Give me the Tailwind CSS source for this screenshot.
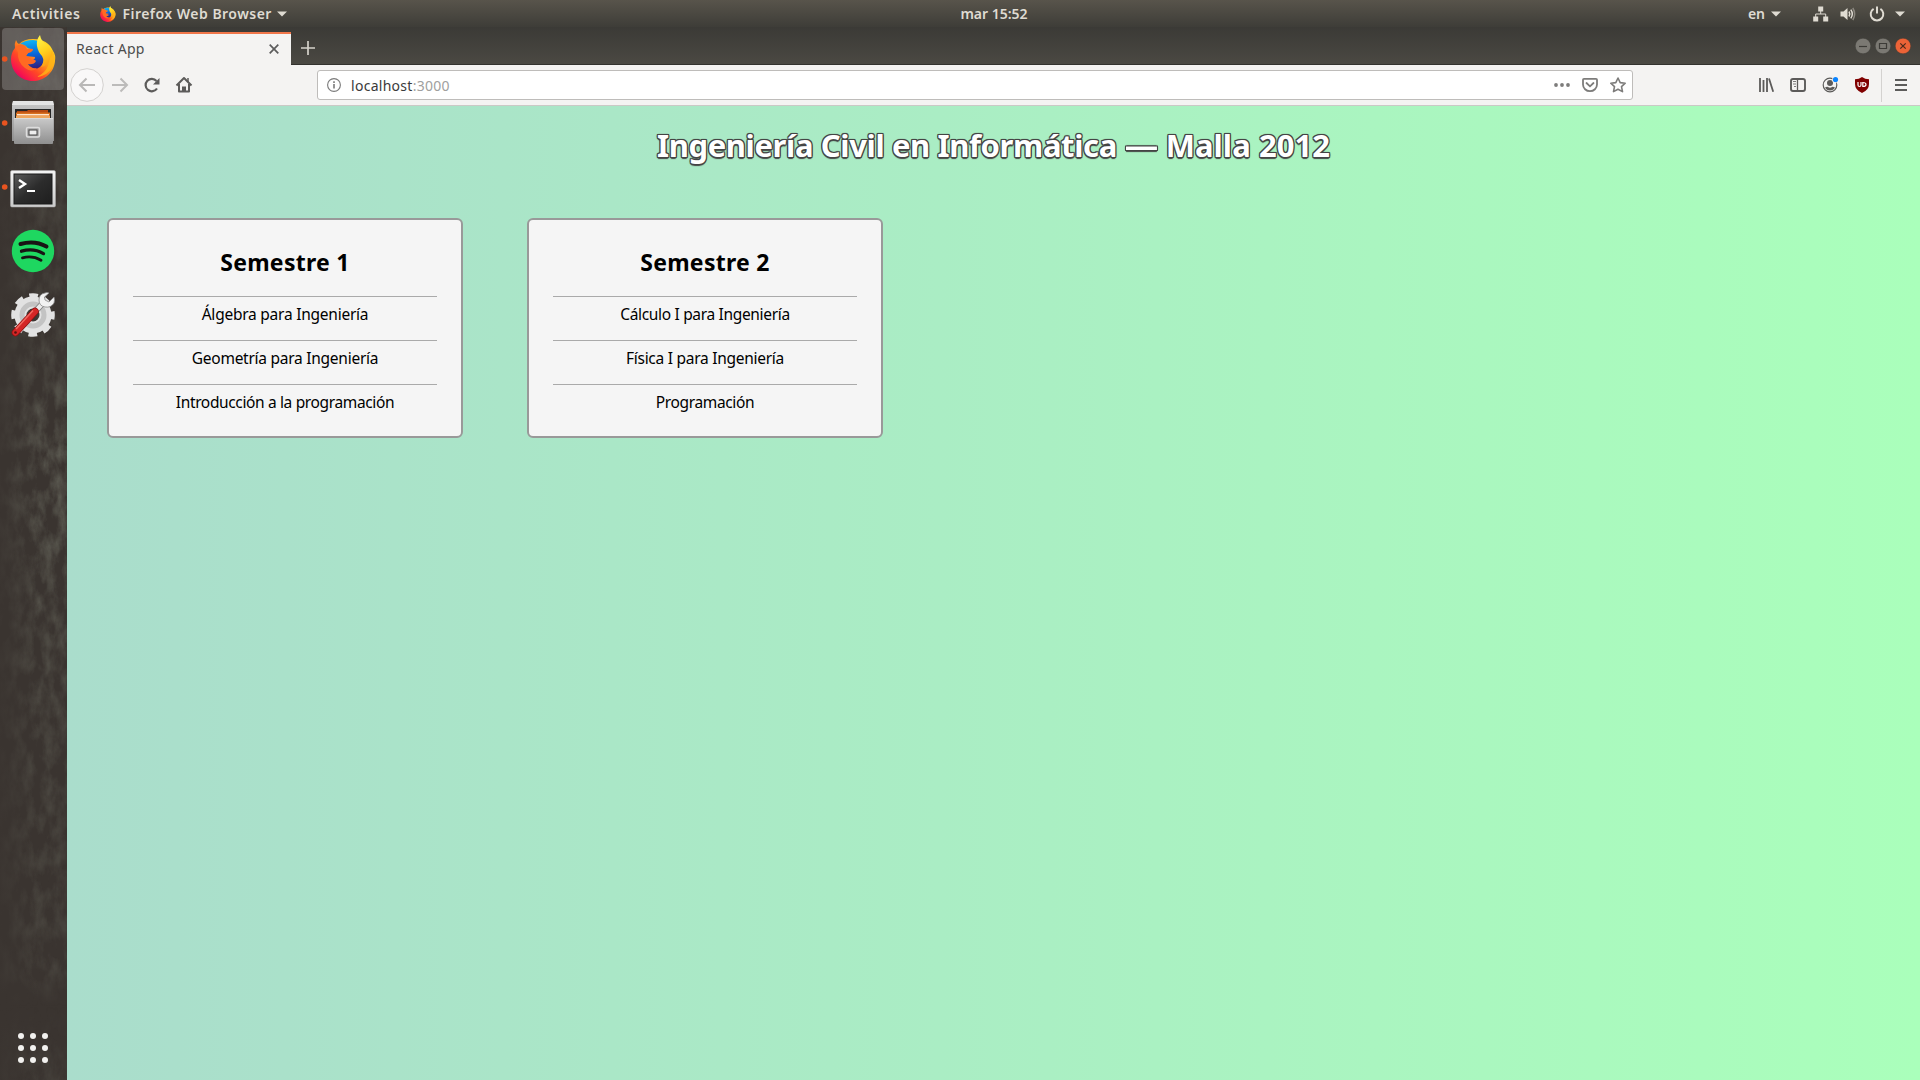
<!DOCTYPE html>
<html lang="es">
<head>
<meta charset="utf-8">
<title>React App</title>
<script src="https://cdn.jsdelivr.net/npm/@tailwindcss/browser@4"></script>
</head>
<body class="w-[1920px] h-[1080px] overflow-hidden flex flex-col bg-[#3a3430] font-['Noto_Sans',sans-serif]">

<!-- GNOME top bar -->
<header class="h-[27px] shrink-0 grid grid-cols-[1fr_auto_1fr] items-center bg-gradient-to-b from-[#58544b] to-[#3e3d38] text-[#dfdbd2] text-[14px] leading-[22px] font-semibold">
  <div class="flex items-center pl-[12px]">
    <span class="whitespace-nowrap tracking-[0.6px]">Activities</span>
    <svg class="w-4 h-4 ml-[20px] mr-[6px]" viewBox="11 8 45 46"><use href="#fox"/></svg>
    <span class="whitespace-nowrap tracking-[0.48px]">Firefox Web Browser</span>
    <svg class="w-[10px] h-[6px] ml-[5px]" viewBox="0 0 10 6"><path d="M0 .5h10L5 5.5z" fill="#dfdbd2"/></svg>
  </div>
  <span class="whitespace-nowrap translate-x-[34px]">mar 15:52</span>
  <div class="flex items-center justify-end pr-[15px]">
    <span class="whitespace-nowrap">en</span>
    <svg class="w-[10px] h-[6px] ml-[6px] mr-[32px]" viewBox="0 0 10 6"><path d="M0 .5h10L5 5.5z" fill="#dfdbd2"/></svg>
    <svg class="w-4 h-4 mr-[11px]" viewBox="0 0 16 16" fill="#dfdbd2"><path d="M5.2.5h5v5h-5zM.2 10.5h5v5h-5zM10.2 10.5h5v5h-5z"/><path d="M7.7 5v3M2.700 11V8h10v3" fill="none" stroke="#dfdbd2"/></svg>
    <svg class="w-4 h-4 mr-[13px]" viewBox="0 0 16 16"><path d="M.5 5.500h3L7.500 2v12l-4-3.500h-3z" fill="#dfdbd2"/><path d="M9 5.500q1.500 2.500 0 5M10.800 3.600q3 4.400 0 8.800" fill="none" stroke="#dfdbd2" stroke-width="1.500"/><path d="M12.800 2q3.700 6 0 12" fill="none" stroke="#8b877f" stroke-width="1.500"/></svg>
    <svg class="w-4 h-4 mr-[10px]" viewBox="0 0 16 16" fill="none" stroke="#dfdbd2" stroke-width="2"><path d="M4.600 2.800a6.300 6.300 0 1 0 6.800 0M8 .5v7"/></svg>
    <svg class="w-[10px] h-[6px]" viewBox="0 0 10 6"><path d="M0 .5h10L5 5.5z" fill="#dfdbd2"/></svg>
  </div>
</header>

<div class="flex flex-1 min-h-0">
  <!-- Dock -->
  <nav class="relative w-[67px] shrink-0 flex flex-col bg-[#3a3430]">
    <svg class="absolute inset-0 w-full h-full" aria-hidden="true">
      <filter id="grain" x="0" y="0" width="100%" height="100%" color-interpolation-filters="sRGB"><feTurbulence type="fractalNoise" baseFrequency=".09 .045" numOctaves="5" seed="8"/><feColorMatrix values="0 0 0 0 .36  0 0 0 0 .355  0 0 0 0 .32  2 0 0 0 -.7"/></filter>
      <linearGradient id="fade" x2="0" y2="1"><stop offset="0" stop-color="#fff" stop-opacity=".3"/><stop offset=".3" stop-color="#fff" stop-opacity=".5"/><stop offset=".4" stop-color="#fff"/><stop offset=".6" stop-color="#fff" stop-opacity=".6"/><stop offset=".9" stop-color="#fff" stop-opacity=".4"/><stop offset=".93" stop-color="#fff" stop-opacity="0"/><stop offset="1" stop-color="#fff" stop-opacity=".4"/></linearGradient>
      <linearGradient id="side"><stop offset="0" stop-color="#3a3430" stop-opacity=".85"/><stop offset=".6" stop-color="#3a3430" stop-opacity="0"/></linearGradient>
      <mask id="m"><rect width="67" height="1053" fill="url(#fade)"/></mask>
      <g mask="url(#m)"><rect width="67" height="1053" filter="url(#grain)"/></g>
      <rect width="67" height="1053" fill="url(#side)"/>
    </svg>
    <!-- Firefox -->
    <svg class="relative w-[67px] h-16" viewBox="0 0 67 64">
      <defs>
        <linearGradient id="fb" x1=".9" y1=".1" x2=".1" y2=".95"><stop offset="0" stop-color="#ffe226"/><stop offset=".35" stop-color="#ffa31a"/><stop offset=".62" stop-color="#ff4a24"/><stop offset=".85" stop-color="#f7134f"/><stop offset="1" stop-color="#c70072"/></linearGradient>
        <linearGradient id="fg" x1=".4" y1="0" x2=".5" y2="1"><stop offset="0" stop-color="#0fb5f5"/><stop offset=".5" stop-color="#0965d8"/><stop offset="1" stop-color="#331c78"/></linearGradient>
        <linearGradient id="ft" x1=".3" y1="0" x2=".6" y2="1"><stop offset="0" stop-color="#fff44a"/><stop offset=".5" stop-color="#ffd21f"/><stop offset="1" stop-color="#ff9a12"/></linearGradient>
        <g id="fox">
          <path d="M16 13Q17 16 19 17Q24 12 33 12Q48 12 53 24Q56 28 55 34C54 46 44 54 33 54C21 54 11 45 11 32Q11 26 15 21Q14 17 16 13Z" fill="url(#fb)"/>
          <path d="M20 17Q25 13 33 13Q40 13 45 19L44 34Q41 42 34 42Q26 42 24 36L29 33Q35 34 35 30L26 29L28 26L33 22Q27 22 26 19Q23 17 20 17Z" fill="url(#fg)"/>
          <path d="M15 21Q18 16 24 18Q26 19 27 22L33 22Q33 25 28 26L26 29Q29 30 31 33Q35 32 36 34Q34 38 28 37Q31 42 37 41Q32 46 25 41Q17 35 18 25Z" fill="#ff6a22"/>
          <path d="M40 8Q36 13 37 19Q38 25 42 29Q45 34 41 40Q49 39 50 31Q53 29 52 24Q49 20 46 17Q41 14 40 8Z" fill="url(#ft)"/>
          <path d="M52 23Q57 31 53 39Q47 50 36 50Q48 46 50 31Z" fill="#ffb417" opacity=".8"/>
        </g>
        <linearGradient id="mt" x2="0" y2="1"><stop offset="0" stop-color="#c9c9c9"/><stop offset="1" stop-color="#8f8f8f"/></linearGradient>
        <linearGradient id="tm" x2="1" y2="1"><stop offset="0" stop-color="#5a5a5a"/><stop offset=".5" stop-color="#2c2c2c"/><stop offset="1" stop-color="#1e1e1e"/></linearGradient>
        <linearGradient id="wh" x2="0" y2="1"><stop offset="0" stop-color="#f4f4f4"/><stop offset="1" stop-color="#c9c9c9"/></linearGradient>
      </defs>
      <rect x="2" y="1" width="62" height="62" rx="4" fill="#fff" fill-opacity=".2"/>
      <circle cx="4.700" cy="32" r="2.800" fill="#e95420"/>
      <use href="#fox"/>
    </svg>
    <!-- Files -->
    <svg class="relative w-[67px] h-16" viewBox="0 0 67 64">
      <circle cx="4.700" cy="32" r="2.800" fill="#e95420"/>
      <path d="M13 10h40l1 5v35H12V15z" fill="url(#mt)"/><path d="M13 10h40l1 4H12z" fill="#e4e4e4"/>
      <rect x="15" y="18" width="36" height="10" fill="#252525"/>
      <path d="M17 20h10l1-1h20v3H17z" fill="#b74a12"/><rect x="16" y="21.500" width="34" height="6" fill="#d9701f"/><rect x="17" y="23" width="32" height="1.500" fill="#ffe6cc"/><rect x="16" y="25" width="34" height="2" fill="#efa65c"/>
      <rect x="14" y="27" width="39" height="26" rx="1" fill="url(#mt)"/><path d="M14 27.500h39" stroke="#dadada"/>
      <rect x="26.500" y="36.500" width="13" height="9.500" rx="1.500" fill="#a5a5a5" stroke="#ddd" stroke-width="1.500"/><rect x="29" y="39" width="8" height="5" fill="#eee" stroke="#444"/>
    </svg>
    <!-- Terminal -->
    <svg class="relative w-[67px] h-16" viewBox="0 0 67 64">
      <circle cx="4.700" cy="32" r="2.800" fill="#e95420"/>
      <rect x="10.500" y="15.500" width="45" height="36.500" rx="1.500" fill="url(#wh)" stroke="#aaa" stroke-width=".5"/>
      <rect x="14" y="19" width="38" height="30" fill="url(#tm)" stroke="#1b1b1b"/>
      <path d="m19 25 6 4-6 4" fill="none" stroke="#fff" stroke-width="2.400"/><path d="M27 36h8" stroke="#fff" stroke-width="2"/>
    </svg>
    <!-- Spotify -->
    <svg class="relative w-[67px] h-16" viewBox="0 0 67 64">
      <circle cx="33" cy="32" r="21.200" fill="#1ed760"/>
      <g fill="none" stroke="#191414" stroke-linecap="round"><path d="M20.500 25q14.500-4 26 2.600" stroke-width="4"/><path d="M21.500 32.200q12-3.500 22 2.400" stroke-width="3.300"/><path d="M22.500 38.800q10-2.600 18.500 2.400" stroke-width="2.800"/></g>
    </svg>
    <!-- Settings -->
    <svg class="relative w-[67px] h-16" viewBox="0 0 67 64">
      <circle cx="33" cy="32" r="18.800" fill="none" stroke="#e2e2e2" stroke-width="6" stroke-dasharray="8.400 6.365" stroke-dashoffset="4.200"/>
      <circle cx="33" cy="32" r="12.500" fill="none" stroke="#e2e2e2" stroke-width="12"/>
      <circle cx="33" cy="32" r="11" fill="none" stroke="#c3c3c3" stroke-width="5"/>
      <path d="M30 34 44 19" stroke="#777" stroke-width="6"/><path d="M30 34 44 19" stroke="#ececec" stroke-width="4.500"/>
      <path d="M45 10q-6 1-6 7t6 7q6 1 9-4 1-3 0-6l-5 5-4-2-.5-3 4.500-4q-2-1-4 0z" fill="#f2f2f2" stroke="#888" stroke-width=".8"/>
      <path d="M15.500 49.500 35 28.500" stroke="#8e0f0f" stroke-width="7.500" stroke-linecap="round"/><path d="M15.500 49.500 35 28.500" stroke="#d42626" stroke-width="6" stroke-linecap="round"/><path d="M16 46 33 27.500" stroke="#f16b62" stroke-width="1.500"/><circle cx="15.500" cy="49.500" r="1.300" fill="#54100e"/>
    </svg>
    <!-- Show applications -->
    <svg class="relative w-[67px] h-16 mt-auto" viewBox="0 0 67 64" fill="#f2f1ef"><circle cx="21" cy="20" r="3"/><circle cx="33" cy="20" r="3"/><circle cx="45" cy="20" r="3"/><circle cx="21" cy="32" r="3"/><circle cx="33" cy="32" r="3"/><circle cx="45" cy="32" r="3"/><circle cx="21" cy="44" r="3"/><circle cx="33" cy="44" r="3"/><circle cx="45" cy="44" r="3"/></svg>
  </nav>

  <!-- Browser window -->
  <div class="flex-1 flex flex-col min-w-0">
    <div class="h-[38px] shrink-0 flex items-end bg-gradient-to-b from-[#3b3a36] to-[#4b4943]">
      <div class="w-[224px] h-[33px] border-t-2 border-[#f0764a] bg-[#f4f3f2] flex items-center justify-between pl-[9px] pr-[12px] pb-[2px] text-[14px] text-[#4c4c4c]">
        <span class="whitespace-nowrap tracking-[0.3px]">React App</span>
        <svg class="w-[10px] h-[10px]" viewBox="0 0 10 10"><path d="m.7.7 8.600 8.600M9.300.7.7 9.300" stroke="#5c5c5c" stroke-width="1.700"/></svg>
      </div>
      <div class="flex-1 h-[33px] border-b border-[#33322e] flex items-center justify-between pl-[10px] pr-[9px]">
        <svg class="w-[14px] h-[14px]" viewBox="0 0 14 14"><path d="M7 0v14M0 7h14" stroke="#d5d2ca" stroke-width="1.700"/></svg>
        <div class="flex gap-1 pb-[5px]">
          <svg class="w-4 h-4" viewBox="0 0 16 16"><circle cx="8" cy="8" r="7.800" fill="#7b7973" stroke="#35342f" stroke-width=".4"/><path d="M4 8.500h8" stroke="#3c3b37" stroke-width="1.200"/></svg>
          <svg class="w-4 h-4" viewBox="0 0 16 16"><circle cx="8" cy="8" r="7.800" fill="#7b7973" stroke="#35342f" stroke-width=".4"/><path d="M4.500 5.500h7v5h-7z" fill="none" stroke="#3c3b37" stroke-width="1.200"/></svg>
          <svg class="w-4 h-4" viewBox="0 0 16 16"><circle cx="8" cy="8" r="7.800" fill="#ec6337" stroke="#35342f" stroke-width=".4"/><path d="m5.300 5.300 5.400 5.400m0-5.400-5.400 5.400" stroke="#4a2b1c" stroke-width="1.200"/></svg>
        </div>
      </div>
    </div>

    <div class="h-[41px] shrink-0 flex items-center bg-[#f4f3f2] border-b border-[#cbc9c6] pl-1 pr-[3px]">
      <svg class="w-[34px] h-[34px] -ml-px" viewBox="0 0 34 34"><circle cx="17" cy="17" r="16.300" fill="#f9f8f8" stroke="#d3d1cf"/><path d="M25 17H10m6.500-6.500L10 17l6.500 6.500" fill="none" stroke="#b9b8b7" stroke-width="2"/></svg>
      <svg class="w-8 h-8" viewBox="0 0 32 32"><path d="M8 16h15m-6.500-6.500L23 16l-6.500 6.500" fill="none" stroke="#bcbbba" stroke-width="2"/></svg>
      <svg class="w-8 h-8" viewBox="0 0 32 32" fill="none" stroke="#5c5b5a" stroke-width="2.200"><path d="M21 19.500A6.200 6.200 0 1 1 20.500 12"/><path d="M23.500 9v6.500H17z" fill="#5c5b5a" stroke="none"/></svg>
      <svg class="w-8 h-8" viewBox="0 0 32 32"><path d="M8.500 16.500 16 9l7.500 7.500M11 15v7.500h10V15" fill="none" stroke="#5c5b5a" stroke-width="2" stroke-linejoin="round"/><path d="M14 23v-5.500h4V23z" fill="#5c5b5a"/><path d="M20 9v4" stroke="#5c5b5a" stroke-width="1.500"/></svg>

      <div class="w-[1316px] h-[30px] ml-[117px] mr-[117px] flex items-center rounded-[3px] border border-[#bebcba] bg-white pl-[9px] pr-[6px] text-[14px]">
        <svg class="w-[14px] h-[14px]" viewBox="0 0 14 14"><circle cx="7" cy="7" r="6.400" fill="none" stroke="#7a7a7a" stroke-width="1.100"/><path d="M7 6v4.500M7 3.200v1.700" stroke="#7a7a7a" stroke-width="1.600"/></svg>
        <span class="ml-[10px] whitespace-nowrap tracking-[0.28px] text-[#3a3a3a]">localhost<span class="text-[#a09f9e]">:3000</span></span>
        <div class="ml-auto flex gap-3 items-center">
          <svg class="w-4 h-4" viewBox="0 0 16 16" fill="#7d7c7b"><circle cx="2" cy="8" r="1.900"/><circle cx="8" cy="8" r="1.900"/><circle cx="14" cy="8" r="1.900"/></svg>
          <svg class="w-4 h-4" viewBox="0 0 16 16" fill="none" stroke="#7d7c7b" stroke-width="1.800"><path d="M2 1.800h12q1 0 1 1V7.500a7 6.700 0 0 1-14 0V2.800q0-1 1-1z"/><path d="m4.500 6 3.500 3.300L11.500 6" stroke-linecap="round"/></svg>
          <svg class="w-4 h-4" viewBox="0 0 16 16" fill="none" stroke="#7d7c7b" stroke-width="1.600" stroke-linejoin="round"><path d="m8 1 2.200 4.600 5 .6-3.700 3.400 1 5L8 12.200l-4.500 2.400 1-5L.8 6.200l5-.6z"/></svg>
        </div>
      </div>

      <svg class="w-8 h-8" viewBox="0 0 32 32" fill="none" stroke="#5c5b5a" stroke-width="1.800"><path d="M10 9v14M13.500 11v12M17 9v14M19 9.500l4.200 13.200"/></svg>
      <svg class="w-8 h-8" viewBox="0 0 32 32" fill="none" stroke="#5c5b5a"><rect x="9" y="10" width="14" height="12" rx="2" stroke-width="1.900"/><path d="M15.500 10v12" stroke-width="1.300"/><path d="M11 12.500h3M11 15h3M12 17.500h2" stroke-width=".8"/></svg>
      <svg class="w-8 h-8" viewBox="0 0 32 32"><circle cx="16" cy="16" r="6.800" fill="none" stroke="#5c5b5a" stroke-width="1.200"/><circle cx="16" cy="14" r="3" fill="#5c5b5a"/><path d="M11 18.500q2-1 3-.5 2 1.300 4 0 1-.5 3 .5-1.500 3-5 3t-5-3z" fill="#5c5b5a"/><circle cx="21.500" cy="10.500" r="3.300" fill="#f4f3f2"/><circle cx="21.500" cy="10.500" r="2.600" fill="#0a84ff"/></svg>
      <svg class="w-8 h-8" viewBox="0 0 32 32"><path d="M16 8q3 2.300 7 2.300V15q0 6-7 9-7-3-7-9v-4.700Q13 10.300 16 8z" fill="#800000"/><path d="M12 13v3q0 1.500 1.500 1.500T15 16v-3M16.800 13.500v4q3.200 0 3.200-2t-3.200-2z" fill="none" stroke="#fff" stroke-width="1.200"/></svg>
      <div class="w-px h-[33px] ml-[3px] mr-[3px] bg-[#d4d2d0]"></div>
      <svg class="w-8 h-8" viewBox="0 0 32 32"><path d="M10 11h12M10 16h12M10 21h12" stroke="#5c5b5a" stroke-width="1.900"/></svg>
    </div>

    <main class="flex-1 bg-linear-[to_right,#aaddcc,#aaffbb] text-black">
      <h1 class="h-[78px] flex items-center justify-center text-[31px] font-bold text-white whitespace-pre [text-shadow:-1px_-1px_0_#444,1px_-1px_0_#444,-1px_1px_0_#444,1px_1px_0_#444,0_2px_1px_#444,0_-1px_1px_#444,1px_0_1px_#444,-1px_0_1px_#444]"><span class="tracking-[-0.38px]">Ingeniería Civil en Informática </span><span class="inline-block scale-x-108 px-[1px]">—</span><span class="tracking-[0.05px]"> Malla 2012</span></h1>
      <div class="flex gap-16 pl-[40px] pt-[34px]">
        <section class="w-[356px] h-[220px] rounded-md border-2 border-[#999] bg-[#f5f5f5] px-6 text-center text-[15.5px] whitespace-nowrap">
          <h2 class="h-[76px] leading-[84px] text-[23px] font-bold tracking-[0.28px]">Semestre 1</h2>
          <p class="h-11 border-t border-[#aaa] leading-[34px] tracking-[-0.24px]">Álgebra para Ingeniería</p>
          <p class="h-11 border-t border-[#aaa] leading-[34px] tracking-[-0.26px]">Geometría para Ingeniería</p>
          <p class="h-11 border-t border-[#aaa] leading-[34px] tracking-[-0.36px]">Introducción a la programación</p>
        </section>
        <section class="w-[356px] h-[220px] rounded-md border-2 border-[#999] bg-[#f5f5f5] px-6 text-center text-[15.5px] whitespace-nowrap">
          <h2 class="h-[76px] leading-[84px] text-[23px] font-bold tracking-[0.28px]">Semestre 2</h2>
          <p class="h-11 border-t border-[#aaa] leading-[34px] tracking-[-0.33px]">Cálculo I para Ingeniería</p>
          <p class="h-11 border-t border-[#aaa] leading-[34px] tracking-[-0.27px]">Física I para Ingeniería</p>
          <p class="h-11 border-t border-[#aaa] leading-[34px] tracking-[-0.36px]">Programación</p>
        </section>
      </div>
    </main>
  </div>
</div>
</body>
</html>
